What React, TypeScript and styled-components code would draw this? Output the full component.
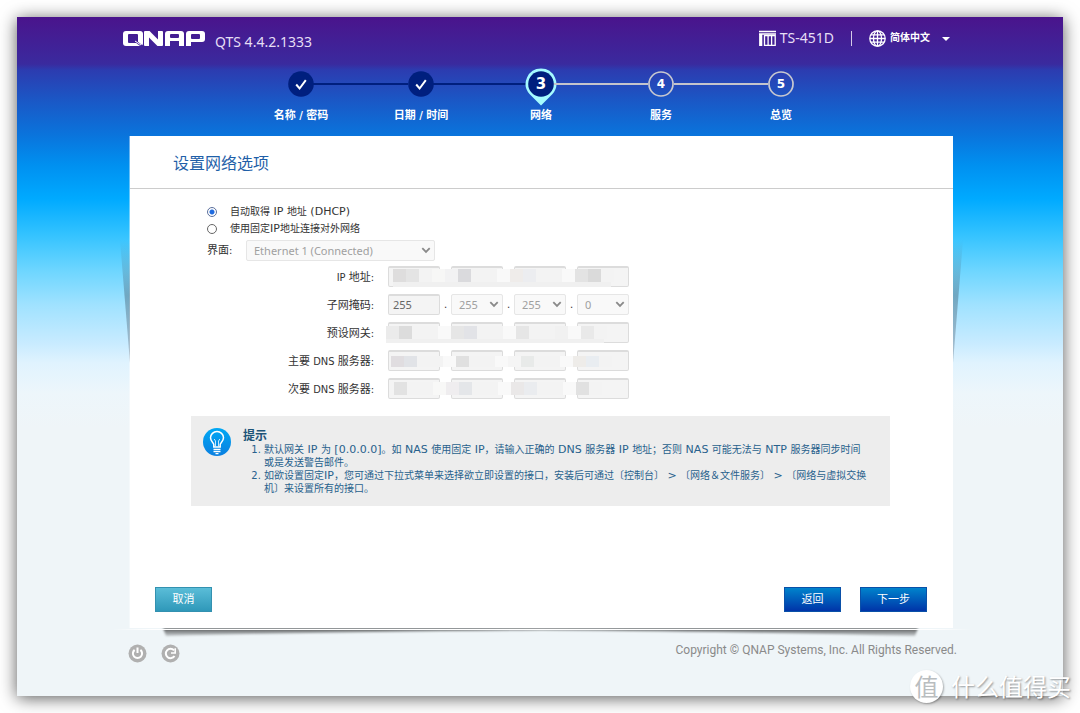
import React, { useState } from 'react';
import styled, { createGlobalStyle, css } from 'styled-components';

const sans = `'DejaVu Sans', 'Noto Sans CJK SC', sans-serif`;
const narrowSans = `'DejaVu Sans Condensed', 'Noto Sans CJK SC', sans-serif`;
const uiSans = `'Noto Sans', 'Noto Sans CJK SC', sans-serif`;

const GlobalStyle = createGlobalStyle`
  *, *::before, *::after { box-sizing: border-box; }
  body { margin: 0; background: #fff; font-family: ${sans}; font-size: 10px; color: #333; }
  button, input, select { font-family: inherit; margin: 0; }
`;

const Page = styled.div`
  position: relative;
  min-height: 100vh;
  padding: 17px;
  overflow: hidden;
`;

const Shell = styled.div`
  display: flex;
  flex-direction: column;
  min-height: calc(100vh - 34px);
  box-shadow: 0 2px 16px rgba(0, 0, 0, 0.65);
  background: linear-gradient(
    #4a148c 0,
    #3a2a9e 47px,
    #2c3cb0 53px,
    #1a58c6 84px,
    #0a74dc 118px,
    #0090f0 148px,
    #00aaff 182px,
    #34c3ff 218px,
    #6bd5ff 252px,
    #a0e2ff 288px,
    #c8ebff 326px,
    #e0f3fe 346px,
    #edf6fb 376px,
    #eff5f8 410px
  );
`;

const Header = styled.header`
  display: flex;
  justify-content: space-between;
  padding: 12px 113px 0 106px;
  height: 49px;
  color: #fff;
`;

const Brand = styled.div`
  display: flex;
  align-items: flex-start;
  gap: 10px;
`;

const LogoSvg = styled.svg`
  margin-top: 2px;
`;

const Version = styled.span`
  font: 14px/16px ${uiSans};
  padding-top: 5px;
  color: #e6def5;
`;

const Tools = styled.div`
  display: flex;
  align-items: center;
  height: 18px;
`;

const Model = styled.span`
  display: flex;
  align-items: center;
  gap: 4px;
  font: 14px/16px ${uiSans};
  color: #e6def5;
`;

const Divider = styled.span`
  width: 1px;
  height: 15px;
  margin: 0 17px;
  background: #d5cbe8;
`;

const LanguageButton = styled.button`
  display: flex;
  align-items: center;
  gap: 4px;
  padding: 0;
  border: 0;
  background: none;
  color: #fff;
  font-size: 10px;
  font-weight: 700;
  line-height: 16px;
`;

const Caret = styled.i`
  margin: 2px 0 0 8px;
  border: 4px solid transparent;
  border-top-color: #fff;
  border-bottom: 0;
`;

const Steps = styled.ol`
  display: grid;
  grid-template-columns: repeat(5, 120px);
  justify-content: center;
  list-style: none;
  margin: 0 0 0 2px;
  padding: 0;
  height: 70px;
`;

type StepState = 'done' | 'current' | 'todo';

const Step = styled.li<{ $state: StepState; $first: boolean }>`
  position: relative;
  display: flex;
  flex-direction: column;
  align-items: center;
  gap: 2px;
  color: #fff;
  font: 700 11px/16px ${narrowSans};

  ${({ $first, $state }) =>
    !$first &&
    css`
      &::before {
        content: '';
        position: absolute;
        top: 17px;
        right: calc(50% + ${$state === 'current' ? 15 : 13}px);
        width: ${$state === 'todo' ? 94 : 96}px;
        height: 2px;
        background: ${$state === 'todo' ? '#c4c4cc' : '#001f7e'};
      }
    `}
`;

const StepIcon = styled.svg`
  position: relative;
`;

const StepNumber = styled.text<{ $large: boolean }>`
  font: 700 ${({ $large }) => ($large ? 15 : 12)}px 'DejaVu Sans', sans-serif;
  fill: #fff;
  text-anchor: middle;
`;

const Card = styled.main`
  position: relative;
  margin: 0 110px 0 113px;
  background: #fff;
  box-shadow: -1px 0 0 rgba(255, 255, 255, 0.4);
`;

const SideShade = styled.span<{ $side: 'left' | 'right' }>`
  position: absolute;
  top: 104px;
  ${({ $side }) => $side}: -10px;
  width: 10px;
  height: 123px;
  background: linear-gradient(rgba(50, 90, 110, 0), rgba(70, 100, 120, 0.45) 45%, rgba(110, 125, 140, 0.4));
  clip-path: ${({ $side }) =>
    $side === 'left' ? 'polygon(0 0, 100% 0, 100% 100%)' : 'polygon(0 0, 100% 0, 0 100%)'};
`;

const FloorShade = styled.svg`
  position: absolute;
  left: 30px;
  top: 100%;
  width: calc(100% - 62px);
  height: 14px;
`;

const FloorLine = styled.span`
  position: absolute;
  left: -18px;
  right: -18px;
  top: calc(100% + 1px);
  height: 1px;
  background: linear-gradient(90deg, transparent, #fff 40px, #fff calc(100% - 40px), transparent);
`;

const Title = styled.h1`
  margin: 0;
  padding: 16px 43px 12px;
  border-bottom: 1px solid #ccc;
  color: #1f5fa8;
  font-size: 16px;
  font-weight: 400;
  line-height: 24px;
`;

const Form = styled.form`
  padding: 14px 26px 16px 25px;
`;

const Choices = styled.fieldset`
  margin: 0 0 0 52px;
  padding: 0;
  border: 0;
`;

const Choice = styled.label`
  display: flex;
  align-items: center;
  gap: 13px;
  height: 17px;
  line-height: 17px;
`;

const Radio = styled.input`
  appearance: none;
  width: 10px;
  height: 10px;
  border: 1px solid #666;
  border-radius: 50%;
  background: #fff;

  &:checked {
    border-color: #5b6f9c;
    background: radial-gradient(circle, #1f6be0 2px, #fff 3px);
  }
`;

const InterfaceRow = styled.div`
  display: grid;
  grid-template-columns: 39px 189px;
  align-items: center;
  margin: 3px 0 5px 52px;
  font: 11px/17px ${narrowSans};
`;

const SelectBox = styled.span<{ $width: number }>`
  position: relative;
  display: block;
  width: ${({ $width }) => $width}px;
  height: 21px;
`;

const Select = styled.select`
  appearance: none;
  width: 100%;
  height: 100%;
  padding: 0 7px;
  border: 1px solid #e6e6e6;
  border-radius: 2px;
  background: #f9f9f9;
  color: #a0a0a0;
  opacity: 1;
  font: 11px/19px ${uiSans};
`;

const Chevron = styled.svg`
  position: absolute;
  right: 4px;
  top: 7px;
  pointer-events: none;
`;

const AddressRow = styled.div`
  display: grid;
  grid-template-columns: 219px 1fr;
  column-gap: 14px;
  align-items: center;
  height: 21px;

  & + & { margin-top: 7px; }
`;

const RowLabel = styled.label`
  padding-top: 2px;
  text-align: right;
  white-space: nowrap;
  font: 11px/17px ${narrowSans};
`;

const Octets = styled.div`
  position: relative;
  display: flex;
`;

const Dot = styled.span`
  width: 11px;
  text-align: center;
  line-height: 21px;
  color: #333;
`;

const Octet = styled.input`
  width: 52px;
  height: 21px;
  padding: 0 4px 1px;
  border: 1px solid #dcdcdc;
  border-top-width: 2px;
  border-radius: 2px;
  background: #f4f4f4;
  color: #666;
  font: 11px/16px ${uiSans};
`;

const Mosaic = styled.svg`
  position: absolute;
  left: -2px;
  top: 0;
`;

const Tip = styled.aside`
  display: grid;
  grid-template-columns: 28px 1fr;
  column-gap: 12px;
  margin: 17px 37px 81px 36px;
  padding: 12px 14px 11px 12px;
  background: #ededed;
  color: #28618c;
  line-height: 13px;
`;

const TipTitle = styled.h2`
  margin: 2px 0 0;
  font-size: 12px;
  line-height: 13px;
  color: #1d5478;
`;

const TipList = styled.ol`
  margin: 0;
  padding-left: 21px;
`;

const Latin = styled.span`
  font-size: 11px;
  line-height: 1;
`;

const Actions = styled.div`
  display: flex;
  gap: 19px;
`;

const Button = styled.button<{ $soft?: boolean }>`
  min-width: 57px;
  height: 25px;
  padding: 0 16px;
  border: 1px solid ${({ $soft }) => ($soft ? '#3391b0' : '#0a50a8')};
  background: ${({ $soft }) =>
    $soft ? 'linear-gradient(#5abdd8, #2f98b9)' : 'linear-gradient(#0083cc, #0034a8)'};
  color: #fff;
  font-size: 11px;
  line-height: 23px;

  &:first-child { margin-right: auto; }
`;

const Footer = styled.footer`
  display: flex;
  justify-content: space-between;
  padding: 14px 106px 0 111px;
`;

const Power = styled.div`
  display: flex;
  gap: 14px;
  padding-top: 2px;
`;

const IconButton = styled.button`
  display: block;
  width: 19px;
  height: 19px;
  padding: 0;
  border: 0;
  background: none;
`;

const Copyright = styled.p`
  margin: 0;
  color: #8a8a8a;
  font: 12px/16px Roboto, sans-serif;
`;

const Watermark = styled.div`
  position: absolute;
  right: 9px;
  bottom: 10px;
  display: flex;
  align-items: center;
  gap: 8px;
  color: #fff;
  font: 24px/34px 'Noto Sans CJK SC', sans-serif;
  text-shadow: 1px 1px 2px rgba(0, 0, 0, 0.4);
`;

const Seal = styled.span`
  width: 33px;
  height: 33px;
  border-radius: 50%;
  background: #fff;
  color: #b9bdbf;
  font-size: 24px;
  line-height: 32px;
  text-align: center;
  text-shadow: none;
  box-shadow: 1px 1px 2px rgba(0, 0, 0, 0.3);
`;

function Logo() {
  return (
    <LogoSvg width="82" height="15" viewBox="0 0 82 15" role="img" aria-label="QNAP">
      <mask id="cutouts">
        <rect width="82" height="15" fill="#fff" />
        <g fill="#000">
          <rect x="5" y="3" width="10" height="9" rx="1" />
          <rect x="26" width="9" height="15" />
          <rect x="47" y="3" width="9" height="4" rx="1" />
          <rect x="47" y="10" width="9" height="5" />
          <rect x="68" y="3" width="9" height="5" rx="1" />
          <rect x="68" y="11" width="14" height="4" />
        </g>
        <line x1="11" y1="9" x2="20" y2="16" stroke="#000" strokeWidth="2" />
      </mask>
      <g fill="#fff" mask="url(#cutouts)">
        <rect width="20" height="15" rx="3" />
        <rect x="21" width="19" height="15" rx="1" />
        <rect x="42" width="19" height="19" rx="3" />
        <rect x="63" width="19" height="11" rx="3" />
        <rect x="63" y="5" width="5" height="10" />
      </g>
      <line x1="24" y1="1" x2="37" y2="14" stroke="#fff" strokeWidth="5" />
      <line x1="12" y1="10" x2="18" y2="14" stroke="#fff" strokeWidth="1" />
    </LogoSvg>
  );
}

function NasIcon() {
  return (
    <svg width="17" height="16" viewBox="0 0 17 16" fill="none" stroke="#fff" aria-hidden="true">
      <path d="M0 1.5h17M0 4h17" strokeWidth="1.4" />
      <path d="M1.7 4v12" strokeWidth="3.2" />
      <path d="M5.5 5.5h10.7v9.8H5.5zM9.1 5.5v9.8M12.6 5.5v9.8" strokeWidth="1.3" />
    </svg>
  );
}

function GlobeIcon() {
  return (
    <svg width="17" height="17" viewBox="0 0 17 17" fill="none" stroke="#fff" strokeWidth="1.3" aria-hidden="true">
      <circle cx="8.5" cy="8.5" r="7.7" />
      <ellipse cx="8.5" cy="8.5" rx="4" ry="7.7" />
      <path d="M8.5 1v15M1 8.5h15M2 4.8h13M2 12.2h13" />
    </svg>
  );
}

function StepMark({ state, index }: { state: StepState; index: number }) {
  return (
    <StepIcon width="36" height="40" viewBox="0 0 36 40" aria-hidden="true">
      {state === 'done' && (
        <>
          <circle cx="18" cy="18" r="12.8" fill="#001f7e" />
          <path d="M13.2 18.5l3.4 4 6.2-8.3" fill="none" stroke="#fff" strokeWidth="2" />
        </>
      )}
      {state === 'current' && (
        <>
          <path d="M18 2.5a15.3 15.3 0 0 1 11.5 25.4L18 39.5 6.5 27.9A15.3 15.3 0 0 1 18 2.5z" fill="#a5fbff" />
          <circle cx="18" cy="18" r="12.8" fill="#001f7e" />
        </>
      )}
      {state === 'todo' && <circle cx="18" cy="18" r="12" fill="none" stroke="#c8c8d0" strokeWidth="1.7" />}
      {state !== 'done' && (
        <StepNumber x="18" y={state === 'current' ? 23 : 22} $large={state === 'current'}>
          {index}
        </StepNumber>
      )}
    </StepIcon>
  );
}

const Arrow = () => (
  <Chevron width="10" height="7" viewBox="0 0 10 7" fill="none" stroke="#8a8a8a" strokeWidth="1.8" aria-hidden="true">
    <path d="M1.3 1.2L5 4.9l3.7-3.7" />
  </Chevron>
);

const steps: { label: string; state: StepState }[] = [
  { label: '名称 / 密码', state: 'done' },
  { label: '日期 / 时间', state: 'done' },
  { label: '网络', state: 'current' },
  { label: '服务', state: 'todo' },
  { label: '总览', state: 'todo' },
];

interface Cover {
  x: number;
  y: number;
  height: number;
  foot: number;
  tones: string[];
}

const a = '#f3f3f3';
const b = '#f9f9f9';

const covers: Record<string, Cover> = {
  ip: {
    x: 7, y: 3, height: 13, foot: 5,
    tones: ['#dedddd', '#e4e4e4', a, '#f7f7f6', '#f2f2f3', '#dadadd', a, a, b, '#efecea', '#ecedf0', a, a, b, '#e3e3e3', '#dadada', a],
  },
  gateway: {
    x: 0, y: 4, height: 13, foot: 4,
    tones: ['#ebebeb', '#dcdcdc', a, a, b, '#e6e6e6', '#e2e3e7', a, a, b, '#e6e6e6', a, a, '#f1f1f1', b, '#e9e9e9', a],
  },
  dns1: {
    x: 5, y: 6, height: 11, foot: 0,
    tones: ['#e0dde0', '#e1e3e7', a, a, b, '#e0e0e0', a, a, b, '#f5f5f5', '#e8eae9', a, a, b, '#eeece9', '#e9edf1', a],
  },
  dns2: {
    x: 8, y: 4, height: 13, foot: 0,
    tones: ['#e2e2e2', a, a, '#f8f8f7', '#efedef', '#e4e6e9', a, a, b, '#eae8e8', '#eaecef', a, a, b, '#e1e1e1', a],
  },
};

function Covered({ id, label }: { id: string; label: string }) {
  const cover = covers[id];
  return (
    <AddressRow>
      <RowLabel htmlFor={id}>{label}</RowLabel>
      <Octets>
        {[0, 1, 2, 3].map((n) => (
          <React.Fragment key={n}>
            {n > 0 && <Dot />}
            <Octet id={n === 0 ? id : undefined} aria-label={`${label} ${n + 1}`} disabled />
          </React.Fragment>
        ))}
        <Mosaic width="242" height="21" viewBox="0 0 242 21" shapeRendering="crispEdges" aria-hidden="true">
          {cover.tones.map((tone, n) => (
            <rect key={n} x={cover.x + n * 13} y={cover.y} width="13" height={cover.height} fill={tone} />
          ))}
          <rect x={cover.x} y={cover.y + cover.height} width="218" height={cover.foot} fill="#f0f0f0" />
        </Mosaic>
      </Octets>
    </AddressRow>
  );
}

export default function App() {
  const [mode, setMode] = useState('dhcp');

  return (
    <Page lang="zh-CN">
      <GlobalStyle />
      <Shell>
        <Header>
          <Brand>
            <Logo />
            <Version>QTS 4.4.2.1333</Version>
          </Brand>
          <Tools>
            <Model>
              <NasIcon />
              TS-451D
            </Model>
            <Divider />
            <LanguageButton type="button">
              <GlobeIcon />
              简体中文
              <Caret />
            </LanguageButton>
          </Tools>
        </Header>

        <Steps>
          {steps.map((step, n) => (
            <Step key={step.label} $state={step.state} $first={n === 0}>
              <StepMark state={step.state} index={n + 1} />
              {step.label}
            </Step>
          ))}
        </Steps>

        <Card>
          <SideShade $side="left" />
          <SideShade $side="right" />
          <Title>设置网络选项</Title>
          <Form onSubmit={(event) => event.preventDefault()}>
            <Choices>
              <Choice>
                <Radio type="radio" name="mode" checked={mode === 'dhcp'} onChange={() => setMode('dhcp')} />
                <span>
                  自动取得<Latin> IP </Latin>地址<Latin> (DHCP)</Latin>
                </span>
              </Choice>
              <Choice>
                <Radio type="radio" name="mode" checked={mode === 'static'} onChange={() => setMode('static')} />
                <span>
                  使用固定<Latin>IP</Latin>地址连接对外网络
                </span>
              </Choice>
            </Choices>
            <InterfaceRow>
              <label htmlFor="interface">界面:</label>
              <SelectBox $width={189}>
                <Select id="interface" disabled>
                  <option>Ethernet 1 (Connected)</option>
                </Select>
                <Arrow />
              </SelectBox>
            </InterfaceRow>

            <Covered id="ip" label="IP 地址:" />
            <AddressRow>
              <RowLabel htmlFor="mask">子网掩码:</RowLabel>
              <Octets>
                <Octet id="mask" defaultValue="255" disabled />
                {['255', '255', '0'].map((value, n) => (
                  <React.Fragment key={n}>
                    <Dot>.</Dot>
                    <SelectBox $width={52}>
                      <Select aria-label={`子网掩码 ${n + 2}`} disabled>
                        <option>{value}</option>
                      </Select>
                      <Arrow />
                    </SelectBox>
                  </React.Fragment>
                ))}
              </Octets>
            </AddressRow>
            <Covered id="gateway" label="预设网关:" />
            <Covered id="dns1" label="主要 DNS 服务器:" />
            <Covered id="dns2" label="次要 DNS 服务器:" />

            <Tip>
              <svg width="28" height="28" viewBox="0 0 28 28" aria-hidden="true">
                <defs>
                  <linearGradient id="bulb" x2="0" y2="1">
                    <stop stopColor="#00a8f4" />
                    <stop offset="1" stopColor="#0a7fe0" />
                  </linearGradient>
                </defs>
                <circle cx="14" cy="14" r="14" fill="url(#bulb)" />
                <g fill="none" stroke="#fff" strokeWidth="1.5">
                  <path d="M10.8 19v-2.5c0-1.6-3.3-3.2-3.3-6.7a6.5 6.3 0 0 1 13 0c0 3.5-3.3 5.1-3.3 6.7V19z" />
                  <path d="M12.5 18.5v-5.5l-1.3-2M15.5 18.5v-5.5l1.3-2" strokeWidth="0.8" />
                  <path d="M10.5 21.5h7M10.5 23.7h7M12.5 25.6h3" strokeWidth="1.3" />
                </g>
              </svg>
              <div>
                <TipTitle>提示</TipTitle>
                <TipList>
                  <li>
                    默认网关<Latin> IP </Latin>为<Latin> [0.0.0.0]</Latin>。如<Latin> NAS </Latin>使用固定
                    <Latin> IP</Latin>，请输入正确的<Latin> DNS </Latin>服务器<Latin> IP </Latin>地址；否则
                    <Latin> NAS </Latin>可能无法与<Latin> NTP </Latin>服务器同步时间
                    <br />
                    或是发送警告邮件。
                  </li>
                  <li>
                    如欲设置固定<Latin>IP</Latin>，您可通过下拉式菜单来选择欲立即设置的接口，安装后可通过〔控制台〕
                    <Latin> &gt; </Latin>〔网络＆文件服务〕<Latin> &gt; </Latin>〔网络与虚拟交换
                    <br />
                    机〕来设置所有的接口。
                  </li>
                </TipList>
              </div>
            </Tip>

            <Actions>
              <Button type="button" $soft>取消</Button>
              <Button type="button">返回</Button>
              <Button type="submit">下一步</Button>
            </Actions>
          </Form>
          <FloorShade viewBox="0 0 760 14" preserveAspectRatio="none" aria-hidden="true">
            <defs>
              <linearGradient id="floor" gradientUnits="userSpaceOnUse" x1="0" y1="0" x2="0" y2="9">
                <stop stopColor="#000" stopOpacity="0.65" />
                <stop offset="1" stopColor="#000" stopOpacity="0.1" />
              </linearGradient>
              <filter id="soften" x="-2%" y="-50%" width="104%" height="200%">
                <feGaussianBlur stdDeviation="1.2" />
              </filter>
            </defs>
            <path d="M3 0H757L754 8Q600 4 380 2Q160 4 6 8z" fill="url(#floor)" filter="url(#soften)" />
          </FloorShade>
          <FloorLine />
        </Card>

        <Footer>
          <Power>
            <IconButton type="button" aria-label="关机">
              <svg width="19" height="19" viewBox="0 0 19 19" fill="none" stroke="#fff" strokeWidth="2">
                <circle cx="9.5" cy="9.5" r="9" fill="#b0b0b0" stroke="none" />
                <path d="M6.6 5.9a4.6 4.6 0 1 0 5.8 0M9.5 3.6v5.4" />
              </svg>
            </IconButton>
            <IconButton type="button" aria-label="重启">
              <svg width="19" height="19" viewBox="0 0 19 19" fill="none" stroke="#fff" strokeWidth="2">
                <circle cx="9.5" cy="9.5" r="9" fill="#b0b0b0" stroke="none" />
                <path d="M13.5 12A4.7 4.7 0 1 1 13 6.3" />
                <path d="M10 9h4.2V4.3" strokeWidth="1.6" />
              </svg>
            </IconButton>
          </Power>
          <Copyright>Copyright © QNAP Systems, Inc. All Rights Reserved.</Copyright>
        </Footer>
      </Shell>
      <Watermark>
        <Seal>值</Seal>
        什么值得买
      </Watermark>
    </Page>
  );
}
